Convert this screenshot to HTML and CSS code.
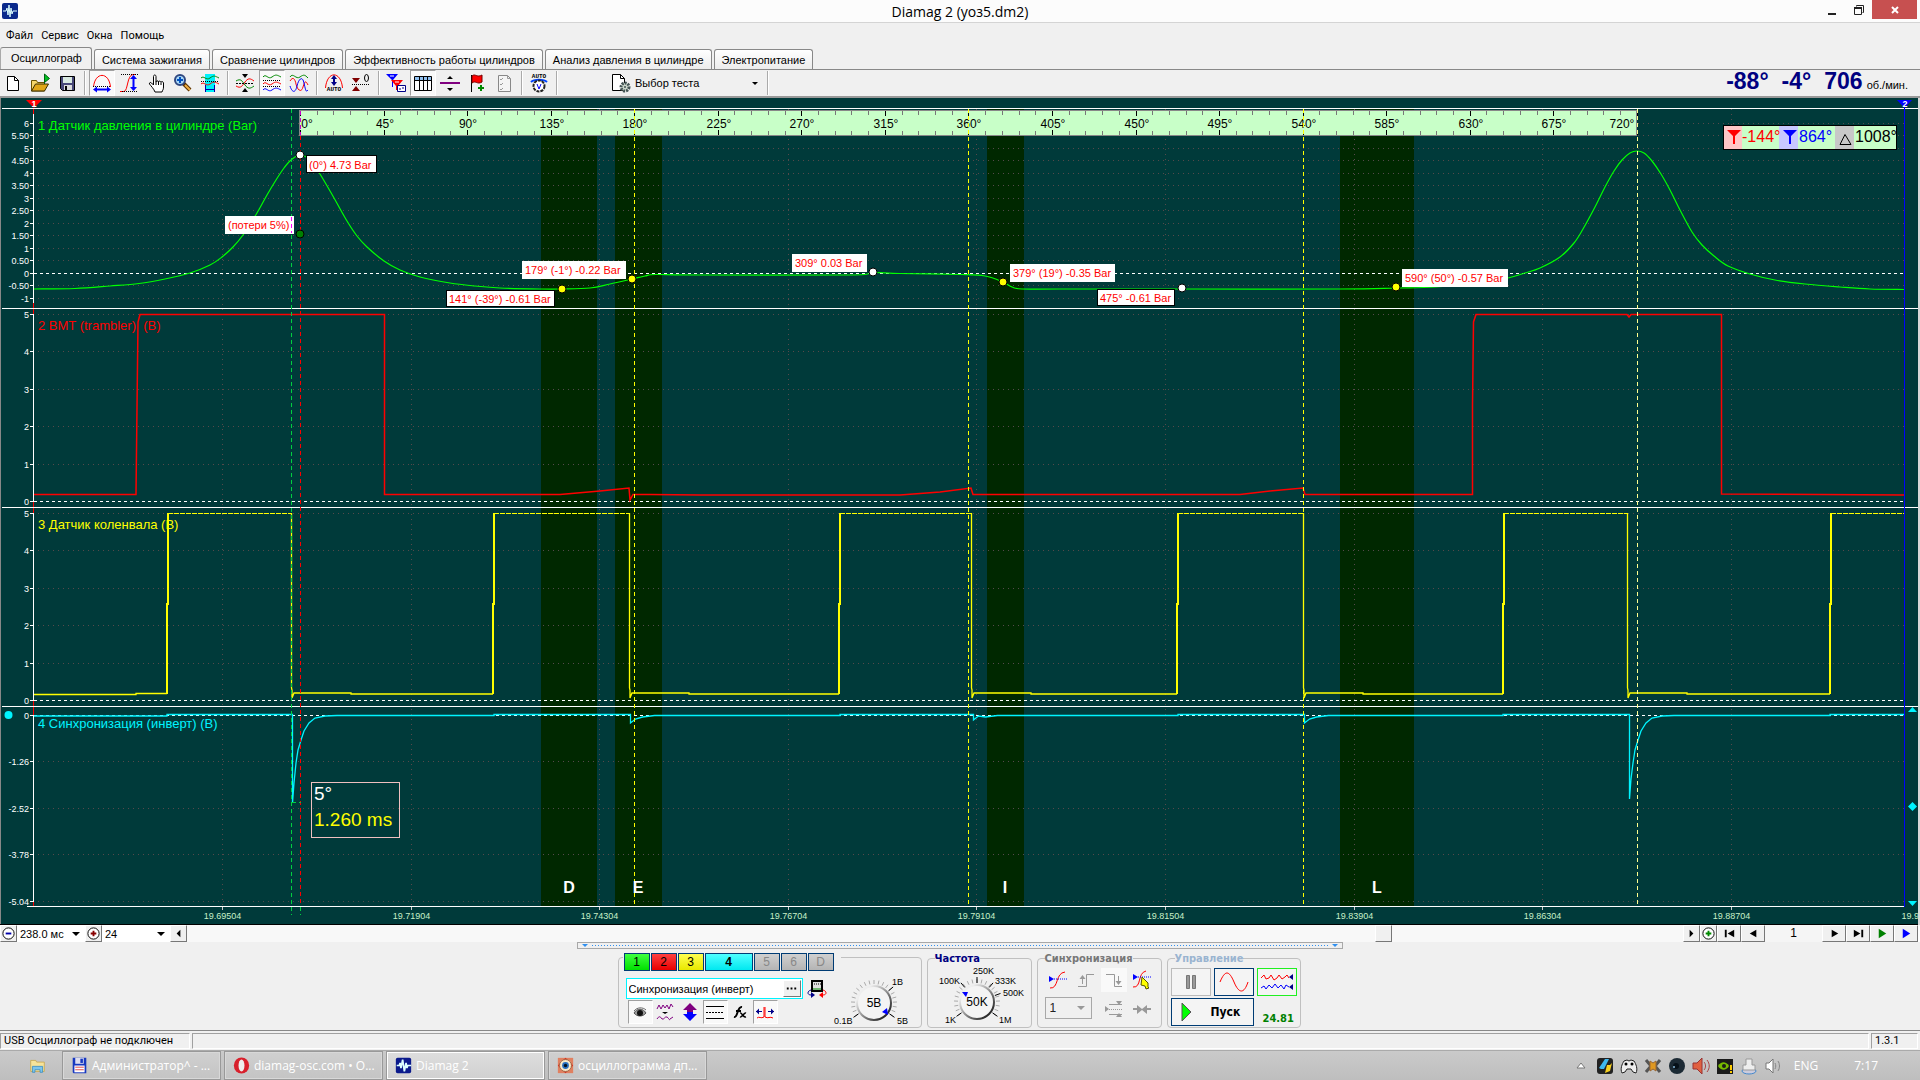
FILE: index.html
```html
<!DOCTYPE html>
<html lang="ru">
<head>
<meta charset="utf-8">
<title>Diamag 2 (уоз5.dm2)</title>
<link rel="stylesheet" href="styles.css">
</head>
<body>
<header class="titlebar">
  <svg class="app-icon" viewBox="0 0 16 16"><rect width="16" height="16" rx="2" fill="#0b2a8c"/><path d="M1 8h3l1-3 1 7 1-10 1 12 1-9 1 6 1-3h4" fill="none" stroke="#dff" /></svg>
  <h1 class="title">Diamag 2 (уоз5.dm2)</h1>
  <div class="win-buttons">
    <button class="win-btn" aria-label="Свернуть"><svg viewBox="0 0 12 12"><path d="M2 9h8v2H2z" fill="#222"/></svg></button>
    <button class="win-btn" aria-label="Восстановить"><svg viewBox="0 0 12 12"><path d="M3.500 2.500v-1h7v7h-1M1.500 4h7v6.500h-7z" fill="none" stroke="#222"/><path d="M1 3h8v2H1z" fill="#222"/></svg></button>
    <button class="win-btn win-close" aria-label="Закрыть"><svg viewBox="0 0 12 12"><path d="M3 3l6 6M9 3l-6 6" stroke="#fff" stroke-width="2"/></svg></button>
  </div>
</header>

<nav class="menubar">
  <a href="#">Файл</a><a href="#">Сервис</a><a href="#">Окна</a><a href="#">Помощь</a>
</nav>

<nav class="tabs">
  <button class="tab tab-active">Осциллограф</button>
  <button class="tab">Система зажигания</button>
  <button class="tab">Сравнение цилиндров</button>
  <button class="tab">Эффективность работы цилиндров</button>
  <button class="tab">Анализ давления в цилиндре</button>
  <button class="tab">Электропитание</button>
</nav>

<div class="toolbar">
  <button class="tool" aria-label="Новый"><svg viewBox="0 0 20 20"><path d="M4.500 3.500h7l4 4v10h-11z" fill="#fff" stroke="#000"/><path d="M11.500 3.500v4h4" fill="none" stroke="#000"/></svg></button>
  <button class="tool" aria-label="Открыть"><svg viewBox="0 0 20 20"><path d="M1.500 18V7.500h5l1 2h7V18z" fill="#f5d76a" stroke="#6b5500"/><path d="M1.500 18l4-7h13l-4 7z" fill="#e0a818" stroke="#3a2c00"/><path d="M14.500 1l5 4.500-5 4z" fill="#00c020" stroke="#006010"/><path d="M14.500 9v2" stroke="#006010"/></svg></button>
  <button class="tool" aria-label="Сохранить"><svg viewBox="0 0 20 20"><path d="M3.500 3.500h14v14h-12l-2-2z" fill="#484878" stroke="#000"/><path d="M6 4h9v6H6z" fill="#d8e8e0"/><path d="M7 12h8v5H7z" fill="#ddd"/><path d="M8 13h2v4H8z" fill="#000"/></svg></button>
  <span class="sep"></span>
  <button class="tool pressed" aria-label="Период"><svg viewBox="0 0 20 20"><path d="M1.500 14C3 -1.500 17 -1.500 18.500 14" fill="none" stroke="#f00"/><path d="M1 13.500h18" stroke="#000" stroke-dasharray="1 1"/><path d="M4 16.500h12" stroke="#00f" stroke-width="2"/><path d="M1 16.500l4-3v6zM19 16.500l-4-3v6z" fill="#00f"/></svg></button>
  <button class="tool" aria-label="Амплитуда"><svg viewBox="0 0 20 20"><path d="M1 18.500h4C9 18 8 2 14 1.500h2" fill="none" stroke="#f00"/><path d="M2 1.500h17M3 18.500h16" stroke="#000" stroke-dasharray="1 1"/><path d="M14.500 5v10" stroke="#00f" stroke-width="2"/><path d="M14.500 2l-3.500 4h7zM14.500 18l-3.500-4h7z" fill="#00f"/></svg></button>
  <button class="tool" aria-label="Рука"><svg viewBox="0 0 20 20"><path d="M7.500 12V3.500c0-2 2.500-2 2.500 0V9c0-1.500 2.500-1.500 2.500 0 0-1.500 2.500-1 2.500.5 0-1.500 2.500-1 2.500.5v4c0 3-1 3-1.500 5h-7C8 16 5 13 3.500 11c-.5-1.500 1-2 2-1z" fill="#fff" stroke="#000"/><path d="M10 9v3M12.500 9v3M15 10v2" stroke="#000"/></svg></button>
  <button class="tool" aria-label="Масштаб"><svg viewBox="0 0 20 20"><path d="M10 10l7 7" stroke="#5a3000" stroke-width="4"/><path d="M12 12l5 5" stroke="#f0b040" stroke-width="2"/><circle cx="7" cy="7" r="5" fill="#a8d8f8" stroke="#304880" stroke-width="2"/><path d="M7 4v6M4 7h6" stroke="#0050c0" stroke-width="2"/></svg></button>
  <button class="tool" aria-label="Выделение"><svg viewBox="0 0 20 20"><path d="M5 1h10v18H5z" fill="#00f0f8"/><path d="M1 5c3-3 5 3 9 0s5-2 9 0" fill="none" stroke="#080"/><path d="M1 11c3-3 5 3 9 0s5-2 9 0" fill="none" stroke="#f00"/><path d="M1 8.500h18" stroke="#000" stroke-dasharray="1 1"/><path d="M5.500 12v7M14.500 12v7M5 16.500h10" stroke="#00a"/></svg></button>
  <span class="sep"></span>
  <button class="tool" aria-label="Совместить"><svg viewBox="0 0 20 20"><path d="M1 8c5-3 6 0 9 4s5 4 9 1" fill="none" stroke="#080"/><path d="M1 13c5 3 6 0 9-4s5-4 9-1" fill="none" stroke="#f00"/><path d="M1 10.500h18" stroke="#000" stroke-dasharray="2 1"/><path d="M10 5L7 1h6zM10 15l-3 4h6z"/></svg></button>
  <button class="tool pressed" aria-label="Раздельно"><svg viewBox="0 0 20 20"><g fill="none"><path d="M1 4c3-4 5 3 9 0s5-2 9 0" stroke="#080"/><path d="M1 11c3-4 5 3 9 0s5-2 9 0" stroke="#f00"/><path d="M1 17c3-4 5 3 9 0s5-2 9 0" stroke="#00f"/><path d="M1 7.500h18M1 13.500h18" stroke="#000" stroke-dasharray="1 1"/></g></svg></button>
  <button class="tool" aria-label="Наложение"><svg viewBox="0 0 20 20"><g fill="none"><path d="M1 4c3-5 6 3 10 0s5-2 8 1" stroke="#080"/><path d="M1 8c3-5 5-2 6 3s5 10 7 3 3-6 5-2" stroke="#f00"/><path d="M1 13c3 9 6 5 7 0s5-12 7-3 2 9 4 7" stroke="#00f"/></g></svg></button>
  <span class="sep"></span>
  <button class="tool" aria-label="Авто"><svg viewBox="0 0 20 20"><path d="M1.500 15C3 -2.500 17 -2.500 18.500 15" fill="none" stroke="#f00"/><path d="M10 4v7" stroke="#008" stroke-width="2"/><path d="M10 2L7 6h6zM10 13l-3-4h6z" fill="#008"/><text x="10" y="18" class="icon-text">AUTO</text></svg></button>
  <button class="tool" aria-label="Ноль"><svg viewBox="0 0 20 20"><path d="M5 10L1 5h8zM5 13l-4 5h8z" fill="#800000"/><path d="M1 11.500h18" stroke="#000" stroke-dasharray="1 1"/><ellipse cx="15.500" cy="5" rx="2" ry="3.500" fill="none" stroke="#000"/></svg></button>
  <span class="sep"></span>
  <button class="tool" aria-label="Маркеры"><svg viewBox="0 0 20 20"><path d="M0 1h12L7 7v7H6V7z" fill="#00f"/><path d="M5 7h12l-5 6v4h-2v-4z" fill="#f00"/><path d="M4 3h4M9 9h4" stroke="#fff"/><path d="M11.500 12.500h8v6h-8z" fill="#fff" stroke="#008"/><path d="M13 16h2M16 15h2" stroke="#008"/></svg></button>
  <button class="tool pressed" aria-label="Таблица"><svg viewBox="0 0 20 20"><path d="M1.500 3.500h17v14h-17z" fill="#fff" stroke="#000"/><path d="M2 4h16v3H2z" fill="#90c0f0"/><path d="M1 7.500h18M6.500 4v14M10.500 4v14M14.500 4v14" stroke="#000"/></svg></button>
  <button class="tool" aria-label="Разделить"><svg viewBox="0 0 20 20"><path d="M0 9h20v2H0z" fill="#800080"/><path d="M10 3L7 6h6zM10 18l-3-3h6z"/></svg></button>
  <button class="tool" aria-label="Флаг"><svg viewBox="0 0 20 20"><path d="M4.500 2v17" stroke="#000"/><path d="M5 3c3-3 5 2 10-1v7c-5 3-6-2-10 1z" fill="#f00" stroke="#700"/><path d="M14 12v6M11 15h6" stroke="#080" stroke-width="2"/></svg></button>
  <button class="tool" aria-label="Список"><svg viewBox="0 0 20 20"><path d="M4.500 2.500h9l3 3v13h-12z" fill="#f4f4f4" stroke="#888"/><path d="M6 6l1 1 2-2M6 11l1 1 2-2M6 16l1 1 2-2M13.500 2.500v3h3" fill="none" stroke="#999"/></svg></button>
  <span class="sep"></span>
  <button class="tool" aria-label="Авто измерение"><svg viewBox="0 0 20 20"><text x="10" y="5" class="icon-text">AUTO</text><path d="M2 9c3-3 13-3 16 0" fill="none" stroke="#04f" stroke-width="2"/><circle cx="10" cy="13" r="5.500" fill="#fff" stroke="#222" stroke-width="2" stroke-dasharray="3 1"/><path d="M8 11l2 5 2-5" fill="none" stroke="#00f"/></svg></button>
  <span class="sep"></span>
  <button class="test-pick"><svg viewBox="0 0 20 20"><path d="M1.500 1.500h8l4 4v12h-12z" fill="#fff" stroke="#000"/><path d="M9.500 1.500v4h4" fill="none" stroke="#000"/><circle cx="14" cy="14" r="4" fill="#ccd8cc" stroke="#455" stroke-width="3" stroke-dasharray="2 1"/><circle cx="14" cy="14" r="1" fill="#455"/></svg><span>Выбор теста</span><i class="caret"></i></button>
  <span class="sep"></span>
  <output class="readout"><b>-88°</b><b>-4°</b><b>706</b><small>об./мин.</small></output>
</div>

<main class="scope">
  <svg id="scope" class="scope-svg" viewBox="0 98 1920 827" role="img" aria-label="Осциллограмма"></svg>
</main>

<div class="scrollrow">
  <button class="bevel w17" aria-label="Уменьшить"><svg viewBox="0 0 16 16"><circle cx="8" cy="8" r="6" fill="#fff" stroke="#000"/><path d="M5 8h6" stroke="#00a" stroke-width="2"/></svg></button>
  <label class="pick"><select aria-label="Развёртка"><option>238.0 мс</option></select><i class="caret"></i></label>
  <button class="bevel w17" aria-label="Увеличить"><svg viewBox="0 0 16 16"><circle cx="8" cy="8" r="6" fill="#fff" stroke="#000"/><path d="M5 8h6M8 5v6" stroke="#800" stroke-width="2"/></svg></button>
  <label class="pick"><select aria-label="Кадры"><option>24</option></select><i class="caret"></i></label>
  <button class="bevel w17" aria-label="Влево"><svg viewBox="0 0 16 16"><path d="M10 4v8L6 8z"/></svg></button>
  <div class="track"><span class="thumb"></span></div>
  <button class="bevel w17" aria-label="Вправо"><svg viewBox="0 0 16 16"><path d="M6 4v8l4-4z"/></svg></button>
  <button class="bevel w17" aria-label="Добавить"><svg viewBox="0 0 16 16"><circle cx="8" cy="8" r="6" fill="#fff" stroke="#000"/><path d="M5 8h6M8 5v6" stroke="#080" stroke-width="2"/></svg></button>
  <button class="bevel w24" aria-label="В начало"><svg viewBox="0 0 16 16"><path d="M3 4h2v8H3zM13 4v8L6 8z"/></svg></button>
  <button class="bevel w24" aria-label="Назад"><svg viewBox="0 0 16 16"><path d="M11 4v8L4 8z"/></svg></button>
  <span class="page-no">1</span>
  <button class="bevel w24" aria-label="Вперёд"><svg viewBox="0 0 16 16"><path d="M5 4v8l7-4z"/></svg></button>
  <button class="bevel w24" aria-label="В конец"><svg viewBox="0 0 16 16"><path d="M3 4v8l7-4zM11 4h2v8h-2z"/></svg></button>
  <button class="bevel w24" aria-label="Пуск вперёд"><svg viewBox="0 0 16 16"><path d="M4 3v10l8-5z" fill="#008000"/></svg></button>
  <button class="bevel w24" aria-label="Воспроизвести"><svg viewBox="0 0 16 16"><path d="M4 3v10l8-5z" fill="#00f"/></svg></button>
</div>

<section class="controls">
  <div class="splitter"><i></i><span></span><i></i></div>
  <div class="groups">
    <div class="group channel-group">
      <div class="channels">
        <button class="ch ch-green">1</button><button class="ch ch-red">2</button><button class="ch ch-yellow">3</button><button class="ch ch-cyan">4</button><button class="ch">5</button><button class="ch">6</button><button class="ch">D</button>
      </div>
      <div class="channel-body">
        <div class="channel-left">
          <div class="name-row">
            <div class="name-box"><input type="text" aria-label="Название канала" value="Синхронизация (инверт)"><button class="bevel dots" aria-label="Выбрать"><svg viewBox="0 0 16 16"><path d="M3 7h2v2H3zM7 7h2v2H7zM11 7h2v2h-2z"/></svg></button></div>
            <svg class="ico" viewBox="0 0 20 20"><path d="M5 2h10v10H5z" fill="#ddd" stroke="#000" stroke-width="2"/><path d="M7 5h7" stroke="#000" stroke-dasharray="1 1"/><path d="M6 10h8" stroke="#080"/><path d="M4 11c-4 1-4 5 0 5" fill="none" stroke="#008"/><path d="M4 13l4 3-4 3z" fill="#008"/><path d="M16 11c4 1 4 5 0 5" fill="none" stroke="#f00"/><path d="M16 13l-4 3 4 3z" fill="#f00"/></svg>
          </div>
          <div class="icon-row">
            <button class="tool pressed" aria-label="Видимость"><svg viewBox="0 0 20 20"><path d="M4 11c3-5 9-5 12 0-3 4-9 4-12 0z" fill="#999" stroke="#555"/><circle cx="10" cy="11" r="3" fill="#111"/><path d="M4 9c3-4 9-4 12-1" fill="none" stroke="#666"/></svg></button>
            <button class="tool" aria-label="Фильтр"><svg viewBox="0 0 20 20"><path d="M2 7l2-4 2 4 2-4 2 3 2-3 2 4 2-5 2 3" fill="none" stroke="#800080"/><path d="M10 12l-3-2h6z"/><path d="M2 17c2-3 3-3 5 0 2 1 3-3 5-2s2 4 3 2l3-2" fill="none" stroke="#800080"/></svg></button>
            <button class="tool" aria-label="Инверсия"><svg viewBox="0 0 20 20"><path d="M10 1l7 7h-4v2H7V8H3z" fill="#800080"/><path d="M10 19l7-7h-4v-2H7v2H3z" fill="#00f"/></svg></button>
            <button class="tool pressed" aria-label="Линии"><svg viewBox="0 0 20 20"><path d="M1 4.500h18M1 16.500h18" stroke="#000"/><path d="M1 10.500h18" stroke="#000" stroke-dasharray="2 1"/></svg></button>
            <button class="tool" aria-label="Функция"><svg viewBox="0 0 20 20"><path d="M4 15c4 1 3-11 8-10M6 9h5" fill="none" stroke="#000" stroke-width="2"/><path d="M10 11c2-1 3 5 6 4M16 11c-2-1-4 5-6 4" fill="none" stroke="#000" stroke-width="1.500"/></svg></button>
            <button class="tool pressed" aria-label="Центр"><svg viewBox="0 0 20 20"><path d="M2 16c2-2 4 1 7-1V5M10 5v10c3 2 5-1 8 1" fill="none" stroke="#f00"/><path d="M1 9.500h6M13 9.500h6" stroke="#008"/><path d="M1 9.500l3-3v6zM19 9.500l-3-3v6z" fill="#008"/></svg></button>
          </div>
        </div>
        <svg class="knob" id="knob-volt" viewBox="828 964 92 64"></svg>
      </div>
    </div>
    <fieldset class="group freq-group"><legend>Частота</legend><svg class="knob" id="knob-freq" viewBox="932 964 96 64"></svg></fieldset>
    <fieldset class="group sync-group"><legend>Синхронизация</legend>
      <div class="sync-grid">
        <button class="tool" aria-label="Уровень"><svg viewBox="0 0 20 20"><path d="M2 18c9 1 5-15 15-16" fill="none" stroke="#f00"/><path d="M6 9h13" stroke="#00f" stroke-dasharray="1 1"/><path d="M1 6v6l5-3z" fill="#00f"/></svg></button>
        <button class="tool" aria-label="Фронт"><svg viewBox="0 0 20 20"><path d="M2 16.500h8.500v-12H18M6.500 14V8" fill="none" stroke="#999"/><path d="M6.500 5l-3 4h6z" fill="#999"/></svg></button>
        <button class="tool dither" aria-label="Спад"><svg viewBox="0 0 20 20"><path d="M2 4.500h8.500v12H18M14.500 6v6" fill="none" stroke="#999"/><path d="M14.500 15l-3-4h6z" fill="#999"/></svg></button>
        <button class="tool" aria-label="Указать"><svg viewBox="0 0 20 20"><path d="M1 17c9 1 4-14 13-16" fill="none" stroke="#f00"/><path d="M6 7h13" stroke="#00f" stroke-dasharray="1 1"/><path d="M1 4v6l5-3z" fill="#00f"/><path d="M10 7l6 6v4l1 1-3 1-1-3-4-1z" fill="#ff0" stroke="#550"/></svg></button>
        <label class="sync-pick"><select disabled aria-label="Канал"><option>1</option></select><i class="caret"></i></label>
        <button class="tool" aria-label="Границы"><svg viewBox="0 0 20 20"><path d="M5 5.500h13M5 15.500h13" stroke="#999"/><path d="M5 10.500h14" stroke="#999" stroke-dasharray="1 1"/><path d="M1 7v6l4-3zM15 6l-3-4h6zM15 14l-3 4h6z" fill="#999"/></svg></button>
        <button class="tool" aria-label="Сжать"><svg viewBox="0 0 20 20"><path d="M1 9h4V6l5 4 5-4v3h4v2h-4v4l-5-4-5 4v-4H1z" fill="#999"/></svg></button>
      </div>
    </fieldset>
    <fieldset class="group run-group"><legend>Управление</legend>
      <div class="run-grid">
        <button class="run-btn run-off" aria-label="Пауза"><svg viewBox="0 0 36 22"><path d="M13.500 4.500h3v13h-3zM19.500 4.500h3v13h-3z" fill="#999" stroke="#777"/></svg></button>
        <button class="run-btn" aria-label="Синус"><svg viewBox="0 0 36 22"><path d="M4 11C9-1 13-1 18 11s10 12 14 0" fill="none" stroke="#f00"/></svg></button>
        <button class="run-btn run-live" aria-label="Поток"><svg viewBox="0 0 36 22"><path d="M2 7l3-3 2 4 3-1 2-3 3 5 3-2 2-3 3 4 3-2 2-2 2 3" fill="none" stroke="#f00"/><path d="M2 17l3-2 2 3 3-4 3 3 3-4 3 4 3-3 3 4 2-4 3 2" fill="none" stroke="#00f"/><path d="M30 6l4-3v6zM30 16l4-3v6z" fill="#008"/></svg></button>
        <button class="run-btn run-start"><svg viewBox="0 0 12 18"><path d="M1 0v18l9-9z" fill="#0f0" stroke="#555"/></svg><span>Пуск</span></button>
        <output class="fps">24.81</output>
      </div>
    </fieldset>
  </div>
</section>

<footer class="statusbar"><span class="st st-first">USB Осциллограф не подключен</span><span class="st st-fill"></span><span class="st st-ver">1.3.1</span></footer>

<nav class="taskbar">
  <button class="pinned" aria-label="Проводник"><svg viewBox="0 0 20 20"><path d="M2 4h6l1 2h9v11H2z" fill="#f6e39a" stroke="#c8a850"/><path d="M4 18v-7h12v7h-3v-3H7v3z" fill="#7cc4ec" stroke="#4090c0"/></svg></button>
  <button class="task"><svg viewBox="0 0 20 20"><path d="M2 1h16v18H3l-1-1z" fill="#1838c0"/><path d="M5 1h10v7H5z" fill="#dde"/><path d="M11 2h3v5h-3z" fill="#1838c0"/><path d="M4 10h12v8H4z" fill="#fff"/><path d="M5 12h10M5 15h10" stroke="#d33"/></svg><span>Администратор^ - ...</span></button>
  <button class="task"><svg viewBox="0 0 20 20"><ellipse cx="10" cy="10" rx="9" ry="9.500" fill="#d8202c"/><ellipse cx="10" cy="10" rx="3.500" ry="7" fill="#eee"/></svg><span>diamag-osc.com • O...</span></button>
  <button class="task task-active"><svg viewBox="0 0 20 20"><rect x="1" y="1" width="18" height="18" rx="2" fill="#0b1a8c"/><path d="M2 10h3l1-3 1 6 2-10 2 14 2-10 1 6 1-3h4" fill="none" stroke="#dff" stroke-width="2"/></svg><span>Diamag 2</span></button>
  <button class="task"><svg viewBox="0 0 20 20"><path d="M1 1h18v18H1z" fill="#e08060"/><path d="M10 1l9 9-9 9-9-9z" fill="#d03020"/><circle cx="10" cy="10" r="7" fill="#f6e8c8" stroke="#964"/><circle cx="10" cy="10" r="4" fill="#2870c0"/><circle cx="10" cy="10" r="2" fill="#012"/></svg><span>осциллограмма дп...</span></button>
  <div class="tray">
    <svg viewBox="0 0 18 18"><path d="M9 6l4 5H5z" fill="#fff" stroke="#777"/></svg>
    <svg viewBox="0 0 18 18"><rect x="1" y="1" width="16" height="16" rx="3" fill="#222"/><path d="M3 11L9 2h4L8 12H5z" fill="#40b8f0"/><path d="M9 16l2-8h3l2-2-2 8z" fill="#f8d020"/></svg>
    <svg viewBox="0 0 18 18"><path d="M2 16c-2-4 0-9 2-12l3-1 2 1 2-1 3 1c2 3 4 8 2 12l-3-1-2-3H7l-2 3z" fill="#eee" stroke="#222"/><circle cx="6" cy="7" r="1.500"/><circle cx="12" cy="7" r="1.500"/></svg>
    <svg viewBox="0 0 18 18"><path d="M2 3l5 6-5 6M16 3l-5 6 5 6" fill="none" stroke="#555" stroke-width="3"/><path d="M6 4l3 2 3-2v10l-3-2-3 2z" fill="#e09820" stroke="#963"/></svg>
    <svg viewBox="0 0 18 18"><circle cx="9" cy="9" r="8" fill="#1c2a34"/><circle cx="8" cy="9" r="3" fill="#061018"/><circle cx="6" cy="10" r="1" fill="#8bd"/></svg>
    <svg viewBox="0 0 18 18"><path d="M1 6h4l5-5v16l-5-5H1z" fill="#e06040" stroke="#933"/><path d="M12 5c2 2 2 6 0 8M15 3c3 4 3 8 0 12" fill="none" stroke="#a44"/></svg>
    <svg viewBox="0 0 18 18"><rect x="1" y="2" width="16" height="15" fill="#1a1a1a"/><path d="M2 9c3-5 8-5 11 0-3 5-8 5-11 0z" fill="#76b900"/><circle cx="8" cy="9" r="2" fill="#1a1a1a"/><path d="M14 8h2v5h-2zM14 14h2v2h-2z" fill="#fc0"/></svg>
    <svg viewBox="0 0 18 18"><ellipse cx="9" cy="14" rx="7" ry="3" fill="#ccd" stroke="#48c"/><path d="M6 2h6v6h3v5H3V8h3z" fill="#eee" stroke="#999"/></svg>
    <svg viewBox="0 0 18 18"><path d="M2 6h3l4-4v14l-4-4H2z" fill="#fff" stroke="#777"/><path d="M11 6c1 2 1 4 0 6M14 4c2 3 2 7 0 10" fill="none" stroke="#888"/></svg>
    <span class="lang">ENG</span><time>7:17</time>
  </div>
</nav>
<script src="scope.js"></script>
</body>
</html>
```
FILE: styles.css
```css
* { box-sizing: border-box; }
body { margin: 0; min-height: 100vh; display: flex; flex-direction: column; background: #f0f0f0; color: #000; font: 11px/14px "Liberation Sans", Arial, sans-serif; }
button, input, select { font: inherit; color: inherit; margin: 0; padding: 0; border: 0; border-radius: 0; background: none; }
svg { display: block; }
.titlebar { display: grid; grid-template-columns: 1fr auto 1fr; align-items: start; height: 23px; background: #fcfcfc; border-bottom: 1px solid #d4d4d4; }
.app-icon { width: 16px; height: 16px; margin: 3px 2px; }
.title { margin: 0; font: 14px/23px "Open Sans", "Noto Sans", sans-serif; }
.win-buttons { display: flex; justify-self: end; padding-right: 3px; }
.win-btn { display: grid; place-items: center; width: 27px; height: 19px; }
.win-btn svg { width: 12px; height: 12px; }
.win-close { width: 45px; background: #c75050; }
.menubar { display: flex; align-items: center; gap: 8px; height: 24px; padding: 2px 6px 0; font: 11px/14px Roboto, "Noto Sans", sans-serif; }
.menubar a { color: #000; text-decoration: none; }
.tabs { display: flex; align-items: flex-end; gap: 2px; height: 22px; }
.tab { height: 20px; padding: 0 7px; background: linear-gradient(#fff, #ececec); border: 1px solid #888; border-bottom: 0; border-radius: 3px 3px 0 0; white-space: nowrap; }
.tab-active { height: 22px; padding: 0 9px 2px 10px; background: #f0f0f0; border-left-color: #aaa; }
.toolbar { display: flex; align-items: center; gap: 1px; height: 29px; padding: 0 12px 0 0; border-top: 1px solid #888; border-bottom: 2px solid #999; }
.tool { display: grid; place-items: center; flex: none; width: 26px; height: 26px; border: 1px solid transparent; }
.tool svg { width: 20px; height: 20px; }
.pressed { background: #f9f9f9; border-color: #a0a0a0 #fff #fff #a0a0a0; }
.sep { flex: none; width: 7px; height: 24px; background: linear-gradient(90deg, transparent 3px, #aaa 3px, #aaa 4px, #fff 4px, #fff 5px, transparent 5px); }
.icon-text { font: bold 6px "Liberation Mono", monospace; text-anchor: middle; }
.test-pick { display: flex; align-items: center; gap: 4px; width: 200px; margin-left: 2px; padding: 0 5px 0 48px; }
.test-pick svg { width: 20px; height: 20px; }
.caret { width: 0; height: 0; border: solid transparent; border-width: 4px 4px 0; border-top-color: #000; }
.test-pick .caret { margin-left: auto; border-width: 3px 3px 0; }
.readout { display: flex; align-items: baseline; gap: 13px; margin-left: auto; color: #000080; font-size: 23px; line-height: 26px; }
.readout small { margin-left: -9px; color: #000; font-size: 11px; }
.scope { background: #003a3a; }
.scope-svg { width: 100%; height: auto; font-family: "Liberation Sans", Arial, sans-serif; }
.t9 { font-size: 9px; }
.t11 { font-size: 11px; }
.t12 { font-size: 12px; }
.t13 { font-size: 13px; }
.t16 { font-size: 16px; }
.t19 { font-size: 19px; }
.bold { font-weight: bold; }
.mid { text-anchor: middle; }
.end { text-anchor: end; }
.scrollrow { display: flex; height: 17px; background: #fff; padding-right: 2px; }
.bevel { display: grid; place-items: center; flex: none; background: #f0f0f0; border: 1px solid; border-color: #fff #777 #777 #fff; }
.bevel svg { width: 15px; height: 15px; }
.w17 { width: 17px; }
.w24 { width: 24px; }
.pick { position: relative; flex: none; width: 68px; background: #fff; }
.pick select { width: 100%; height: 17px; padding-left: 3px; appearance: none; font-size: 11px; }
.pick .caret { position: absolute; right: 5px; top: 7px; }
.track { flex: 1; background: #f8f8f8; display: grid; grid-template-columns: 1202fr 17px 294fr; }
.thumb { grid-column: 2; background: #f0f0f0; border: 1px solid; border-color: #fff #777 #777 #fff; }
.page-no { width: 57px; background: #f5f5f5; text-align: center; line-height: 17px; font-size: 12px; }
.controls { flex: 1; min-height: 89px; border-bottom: 1px solid #888; }
.splitter { display: flex; align-items: center; gap: 4px; width: 766px; height: 7px; margin: 0 auto; padding: 0 4px; border: 1px solid #a8a8a8; }
.splitter i { border: solid transparent; border-width: 3px 3px 0; border-top-color: #3090f0; }
.splitter span { flex: 1; height: 1px; background: repeating-linear-gradient(90deg, #3090f0 0 1px, transparent 1px 3px); }
.groups { display: flex; justify-content: center; gap: 5px; padding: 4px 2px 0 0; }
.group { height: 75px; margin: 0; padding: 0; min-width: 0; border: 1px solid #c0c0c0; border-radius: 4px; }
.group legend { height: 11px; margin-left: 7px; padding: 0; font: bold 11px/11px "DejaVu Sans Condensed", "DejaVu Sans", sans-serif; }
.channel-group { width: 304px; height: 71px; margin-top: 4px; }
.channels { display: flex; width: 218px; gap: 1px; margin: -5px 0 0 4px; background: #f0f0f0; padding: 0 1px; }
.ch { width: 26px; height: 18px; border: 1px solid #003c74; background: linear-gradient(#d0d0d0, #b4b4b4); color: #888; font-size: 12px; }
.ch-green, .ch-red, .ch-yellow, .ch-cyan { color: #000; }
.ch-green { background: linear-gradient(#40ff40, #00e000); }
.ch-red { background: linear-gradient(#ff4040, #e80000); }
.ch-yellow { background: linear-gradient(#ffff50, #e8e800); }
.ch-cyan { width: 48px; background: linear-gradient(#50ffff, #00e8f0); font-weight: bold; }
.channel-body { display: flex; justify-content: space-between; }
.channel-left { padding: 7px 0 0 7px; }
.name-row { display: flex; align-items: center; gap: 4px; }
.name-box { display: flex; width: 177px; height: 21px; padding: 1px; border: 1px solid #00f4ff; background: #fff; }
.name-box input { flex: 1; min-width: 0; padding-left: 1px; }
.dots { width: 18px; height: 17px; }
.ico { width: 20px; height: 20px; }
.icon-row { display: flex; margin-top: 1px; padding-left: 2px; }
.icon-row .tool { width: 25px; height: 24px; }
.knob { width: 92px; height: 64px; margin-top: -6px; font: 9px "Liberation Sans", Arial, sans-serif; }
.freq-group { width: 105px; }
.freq-group legend { color: #000080; }
.freq-group .knob { width: 96px; margin: 0 0 0 4px; }
.sync-group { width: 125px; }
.sync-group legend { color: #777; }
.sync-grid { display: grid; grid-template-columns: repeat(4, 28px); grid-auto-rows: 24px; gap: 5px 0; padding: 4px 0 0 7px; }
.sync-grid .tool { height: 24px; }
.dither { background: #f9f9f9; }
.sync-pick { position: relative; grid-column: span 2; width: 47px; height: 22px; border: 1px solid #a8a8a8; }
.sync-pick select { width: 100%; height: 20px; padding-left: 4px; appearance: none; font-size: 12px; color: #222; opacity: 1; }
.sync-pick .caret { position: absolute; right: 6px; top: 8px; border-top-color: #999; }
.run-group { width: 134px; }
.run-group legend { color: #9ab4d0; }
.run-grid { display: grid; grid-template-columns: repeat(3, 40px); gap: 2px 3px; padding: 4px 0 0 3px; }
.run-btn { display: grid; place-items: center; height: 28px; border: 1px solid #003c74; background: #f4f4f4; }
.run-btn svg { width: 36px; height: 22px; }
.run-off { border-color: #bbb; }
.run-live { border-color: #20f020; }
.run-start { grid-column: span 2; display: flex; align-items: center; gap: 18px; padding-left: 9px; font: bold 12px/14px "DejaVu Sans Condensed", sans-serif; }
.run-start svg { width: 12px; height: 18px; }
.fps { align-self: end; margin-left: 6px; color: #008000; font: bold 11px/14px "DejaVu Sans Condensed", sans-serif; }
.statusbar { display: flex; gap: 2px; height: 19px; padding: 2px 2px 1px 0; font: 11px/14px Roboto, "Noto Sans", sans-serif; }
.st { padding: 0 3px; border: 1px solid; border-color: #a0a0a0 #fff #fff #a0a0a0; white-space: nowrap; }
.st-first { width: 190px; }
.st-fill { flex: 1; }
.st-ver { width: 47px; }
.taskbar { display: flex; align-items: stretch; gap: 3px; height: 30px; background: linear-gradient(#cacaca, #bebebe); border-top: 1px solid #aaa; color: #fff; font: 12px/16px "Open Sans", "Noto Sans", sans-serif; }
.pinned { display: grid; place-items: center; width: 59px; padding-left: 16px; }
.pinned svg, .task svg { flex: none; width: 17px; height: 17px; }
.task { display: flex; align-items: center; gap: 4px; width: 159px; padding: 0 8px; border: 1px solid #999; box-shadow: inset 0 0 0 1px #d8d8d8; background: linear-gradient(#d0d0d0, #c4c4c4); white-space: nowrap; }
.task-active { background: linear-gradient(#dedede, #d0d0d0); box-shadow: inset 0 0 0 1px #fff; }
.tray { display: flex; align-items: center; gap: 6px; margin-left: auto; padding-right: 42px; }
.tray svg { width: 18px; height: 18px; }
.lang { margin-left: 6px; }
.tray time { margin-left: 30px; }
```
FILE: scope.js
```js
const NS = 'http://www.w3.org/2000/svg';
const scope = document.getElementById('scope');

function add(parent, tag, attrs, text) {
  const el = document.createElementNS(NS, tag);
  for (const k in attrs) el.setAttribute(k, attrs[k]);
  if (text !== undefined) el.textContent = text;
  parent.appendChild(el);
  return el;
}
const line = (x1, y1, x2, y2, stroke, dash) =>
  add(scope, 'path', { d: `M${x1} ${y1}L${x2} ${y2}`, stroke, fill: 'none', 'shape-rendering': 'crispEdges', 'stroke-dasharray': dash || 'none' });
const rect = (x, y, width, height, fill, stroke) =>
  add(scope, 'rect', { x, y, width, height, fill, stroke: stroke || 'none' });
const label = (x, y, text, fill, cls) => add(scope, 'text', { x, y, fill, class: cls, style: 'white-space:pre' }, text);
const trace = (d, stroke, width, dash) =>
  add(scope, 'path', { d, stroke, fill: 'none', 'stroke-width': width || 1, 'stroke-dasharray': dash || 'none' });

const LEFT = 33.5, RIGHT = 1904.5, TOP = 108.5, BOTTOM = 906.5;

// phase bands
[[541, 597], [615, 662], [987, 1024], [1340, 1414]].forEach(([a, b]) => rect(a, 109, b - a, 797, '#002800'));

// panels: y position and text of each tick
const panels = [
  { top: 108.5, end: 303, zero: 273.5, ticks: [6, 5.5, 5, 4.5, 4, 3.5, 3, 2.5, 2, 1.5, 1, 0.5, 0, -0.5, -1].map(v => [Math.floor(273 - 25 * v) + 0.5, v % 1 ? v.toFixed(2) : v]) },
  { top: 308.5, end: 501, zero: 501.5, ticks: [5, 4, 3, 2, 1, 0].map(v => [Math.round(501 - 37.4 * v) + 0.5, v]) },
  { top: 507.5, end: 700, zero: 700.5, ticks: [5, 4, 3, 2, 1, 0].map(v => [Math.round(700 - 37.4 * v) + 0.5, v]) },
  { top: 706.5, end: 901, zero: 715.5, ticks: [0, 1, 2, 3, 4].map(n => [Math.floor(715 + 46.5 * n) + 0.5, n ? (-1.26 * n).toFixed(2) : 0]) }
];
const GRID = '#56494a';
for (let i = 0; i < 9; i++) {
  const x = Math.round(222 + 188.6 * i) + 0.5;
  line(x, 109, x, 906, GRID, '1 4');
  line(x, 907, x, 910, '#ccc');
  label(x, 919, (19.69504 + 0.024 * i).toFixed(5), '#c8f0c8', 't9 mid');
}
label(1920, 919, '19.91104', '#c8f0c8', 't9 mid');
line(LEFT, TOP, LEFT, BOTTOM, '#f00');
panels.forEach(p => {
  p.ticks.forEach(([y, t]) => {
    if (y !== p.zero) line(38, y, RIGHT, y, GRID, '1 4');
    line(30, y, 34, y, '#fff');
    label(29, y + 3, t, '#fff', 't9 end');
  });
  line(2, p.top, 1918, p.top, '#fff');
  line(LEFT, p.ticks[0][0] - (p === panels[0] ? 10 : 0), LEFT, p.end, '#fff');
  line(34, p.zero, RIGHT, p.zero, '#fff', '3 3');
});
line(27, BOTTOM, RIGHT, BOTTOM, '#fff');

// degree ruler
rect(299.5, 110.5, 1337, 25, '#c8ffc8', '#888');
for (let i = 0; i <= 80; i++) {
  const x = Math.round(300 + 16.71 * i) + 0.5, major = i % 5 === 0, len = major ? 5 : 4;
  line(x, 111, x, 111 + len, major ? '#000' : '#777');
  line(x, 135, x, 135 - len, major ? '#000' : '#777');
}
for (let i = 0; i <= 16; i++) {
  const x = i === 0 ? 307 : i === 16 ? 1622 : 301 + 83.55 * i;
  label(Math.round(x), 128, i * 45 + '°', '#000', 't12 mid');
}

// smooth path through measured points
function smooth(pts) {
  let d = `M${pts[0]}`;
  for (let i = 0; i < pts.length - 1; i++) {
    const a = pts[i - 1] || pts[i], b = pts[i], c = pts[i + 1], e = pts[i + 2] || c;
    d += `C${b[0] + (c[0] - a[0]) / 6} ${b[1] + (c[1] - a[1]) / 6} ${c[0] - (e[0] - b[0]) / 6} ${c[1] - (e[1] - b[1]) / 6} ${c[0]} ${c[1]}`;
  }
  return d;
}
trace(smooth([[34, 289], [75, 288.5], [110, 286], [139, 283.5], [165, 279], [190, 273], [210, 265], [222, 257], [233, 247], [243, 235], [257, 213], [267, 195], [276, 180], [284, 168], [291, 160], [300, 155], [310, 160], [320, 174], [334, 198], [347, 221], [357, 236], [367, 247], [384, 261], [400, 270], [420, 277], [450, 283], [475, 286], [500, 288], [540, 289], [562, 289], [590, 288], [610, 284], [632, 279], [645, 276], [656, 274.5], [700, 275], [850, 275], [873, 272.5], [900, 273.5], [960, 274.5], [985, 276], [1003, 282], [1012, 287], [1022, 289], [1060, 289], [1182, 289], [1340, 289], [1396, 288], [1435, 287], [1480, 283], [1508, 278], [1525, 273], [1540, 268], [1560, 257], [1574, 243], [1583, 229], [1595, 207], [1605, 187], [1614, 171], [1622, 160], [1630, 153], [1637, 151], [1644, 153], [1652, 161], [1661, 174], [1670, 190], [1680, 210], [1692, 232], [1702, 245], [1714, 256], [1728, 266], [1750, 274], [1775, 280], [1805, 284], [1840, 287], [1870, 289], [1904, 289.5]]), '#0f0', 1.2);

trace('M34 494.500H136L137 408L138 322L140 314.500H384.500V494.500H560L600 491L629 488L630 500L633 494.500H650L700 495H900L940 492L971 488L973 494.500H1240L1270 491L1303 488L1305 494.500H1472.500V405L1473.500 322L1476 314.500H1627L1629 317L1631 314.500H1721.500V494L1904 495', '#f00', 1.5);

const rises = [168, 494, 840, 1178, 1504, 1831], drops = [291, 629, 971, 1303, 1627];
let start = 34;
rises.forEach((r, i) => {
  const d = drops[i], end = d || 1904;
  trace(`${i ? `M${start}.5 513V688L${start + 1} 690V698L${start + 3} 693H${start + 60}V694` : 'M34 694.500H136V693.500'}H${r - 1}`, '#ff0', 1.3);
  trace(`M${r - 1} 694V604H${r}V513`, '#ff0', 2);
  trace(`M${r} 513.500H${end}`, '#ff0', 1, '5 1');
  start = d;
});

const decay = (x, y) => `V${y}L${x + 2} ${y - 20}L${x + 4} 763L${x + 6} 750L${x + 9} 740L${x + 12} 731L${x + 17} 723L${x + 23} 718L${x + 33} 716L${x + 45} 715.500`;
const dip = (x, y) => `H${x}V${y}L${x + 5} ${y - 4}L${x + 12} 717L${x + 24} 715.500`;
trace(`M34 716H167V714.500H292.500${decay(292, 803)}H494V714.500${dip(630.5, 723)}H840V714.500${dip(973.5, 720)}H1178V714.500${dip(1304.5, 723)}H1503V714.500H1629.500${decay(1629, 799)}H1830V714.500H1904`, '#00f4ff', 1.3);

// dead centre lines
[634.5, 968.5, 1303.5, 1637.5].forEach(x => line(x, 109, x, 906, x > 1600 ? '#ffff90' : '#ff0', '4 3'));
line(291.5, 109, 291.5, 915, '#00d040', '4 3');
line(300.5, 136, 300.5, 906, '#f00', '4 3');
line(300.5, 111, 300.5, 135, '#c0c', '4 3');
line(300.5, 907, 300.5, 915, '#00d040', '4 3');
line(292, 802.5, 301, 802.5, '#00d040', '4 3');
line(RIGHT, 106, RIGHT, BOTTOM, '#00f');

// channel captions
label(38, 130, '1 Датчик давления в цилиндре (Bar)', '#0f0', 't13');
label(38, 330, '2 BMT (trambler)  (В)', '#f00', 't13');
label(38, 529, '3 Датчик коленвала (В)', '#ff0', 't13');
label(38, 728, '4 Синхронизация (инверт) (В)', '#00f4ff', 't13');

// measured points
[[300, 155, '#fff'], [300, 234, '#008000'], [562, 289, '#ff0'], [632, 279, '#ff0'], [873, 272, '#fff'], [1003, 282, '#ff0'], [1182, 288, '#fff'], [1396, 287, '#ff0']]
  .forEach(([cx, cy, fill]) => add(scope, 'circle', { cx, cy, r: 4, fill, stroke: '#000' }));
[[306.5, 155.5, 70, 17, '(0°) 4.73 Bar', 1], [225, 216, 69, 18, '(потери 5%)'], [522, 261, 104, 18, '179° (-1°) -0.22 Bar'], [446.5, 290.5, 108, 16, '141° (-39°) -0.61 Bar', 1], [792, 254, 75, 18, '309° 0.03 Bar'], [1010, 264, 105, 18, '379° (19°) -0.35 Bar'], [1097.5, 289.5, 77, 16, '475° -0.61 Bar', 1], [1402, 269, 106, 18, '590° (50°) -0.57 Bar']]
  .forEach(([x, y, w, h, t, framed]) => { rect(x, y, w, h, '#fff', framed ? '#000' : 'none'); label(Math.floor(x) + 3, Math.ceil(y) + h - (framed ? 4 : 5), t, '#f00', 't11'); });
line(291.5, 217, 291.5, 233, '#f0f', '4 3');

rect(311.5, 782.5, 88, 55, 'none', '#f0c0c0');
label(314, 800, '5°', '#fff', 't19');
label(314, 826, '1.260 ms', '#ff0', 't19');
[[569, 'D'], [638, 'E'], [1005, 'I'], [1377, 'L']].forEach(([x, t]) => label(x, 893, t, '#fff', 't16 bold mid'));

// cursor legend
rect(1723.5, 125.5, 173, 24, '#c8ffc8', '#000');
rect(1724, 126, 18, 23, '#ffc8c8'); rect(1779, 126, 19, 23, '#c8c8ff'); rect(1835, 126, 19, 23, '#c8c8c8');
const shape = (d, fill, stroke) => add(scope, 'path', { d, fill, stroke: stroke || 'none' });
shape('M1727 130h14l-6 6v8h-2v-8z', '#f00');
shape('M1783 130h14l-6 6v8h-2v-8z', '#00f');
shape('M1845 134.500l-5 10h11z', 'none', '#000');
label(1742, 142, '-144°', '#f00', 't16');
label(1799, 142, '864°', '#00f', 't16');
label(1855, 142, '1008°', '#000', 't16');

// cursor and range handles
shape('M26 100h16l-8 8z', '#f00'); label(34, 107, '1', '#fff', 't9 bold mid');
shape('M1897 100h15l-7.500 8z', '#00f'); label(1905, 107, '2', '#fff', 't9 bold mid');
add(scope, 'circle', { cx: 8.5, cy: 715, r: 4, fill: '#00f4ff' });
shape('M1908 712l4.500-5 4.500 5z', '#00f4ff');
shape('M1912.500 802l4.500 4.500-4.500 4.500-4.500-4.500z', '#00f4ff');
shape('M1908 901l4.500 5 4.500-5z', '#00f4ff');
rect(1918, 98, 2, 827, '#d8d8d8');
rect(0, 98, 1, 827, '#888');
rect(0, 924, 1918, 1, '#000');

// rotary knobs
function knob(id, cx, cy, text, labels, major, pointer) {
  const svg = document.getElementById(id);
  const grad = add(svg, 'linearGradient', { id: id + '-rim', x1: 0, y1: 0, x2: 1, y2: 1 });
  add(grad, 'stop', { offset: 0.2, 'stop-color': '#eee' });
  add(grad, 'stop', { offset: 1, 'stop-color': '#000' });
  for (let a = 145; a <= 395; a += 12.5) {
    const r = a * Math.PI / 180, c = Math.cos(r), s = Math.sin(r);
    add(svg, 'path', { d: `M${cx + 19 * c} ${cy + 19 * s}L${cx + 23 * c} ${cy + 23 * s}`, stroke: '#aaa' });
  }
  major.forEach(a => {
    const r = a * Math.PI / 180, c = Math.cos(r), s = Math.sin(r);
    add(svg, 'path', { d: `M${cx + 19 * c} ${cy + 19 * s}L${cx + 25 * c} ${cy + 25 * s}`, stroke: '#000' });
  });
  add(svg, 'circle', { cx, cy, r: 17, fill: '#f4f4f4', stroke: `url(#${id}-rim)`, 'stroke-width': 2 });
  add(svg, 'path', { d: pointer, fill: '#00f' });
  add(svg, 'text', { x: cx, y: cy + 4, class: 't12 mid' }, text);
  labels.forEach(([x, y, t]) => add(svg, 'text', { x, y }, t));
}
knob('knob-volt', 873, 1002, '5В', [[833, 1023, '0.1В'], [891, 984, '1В'], [896, 1023, '5В']], [145, 320, 35], 'M881 1011l5-4 1 7z');
knob('knob-freq', 977, 1002, '50K', [[939, 984, '100K'], [973, 974, '250K'], [995, 984, '333K'], [1003, 996, '500K'], [999, 1023, '1M'], [945, 1023, '1K']], [145, 230, 270, 310, 340, 35], 'M962 992h6l-2 5z');
```
